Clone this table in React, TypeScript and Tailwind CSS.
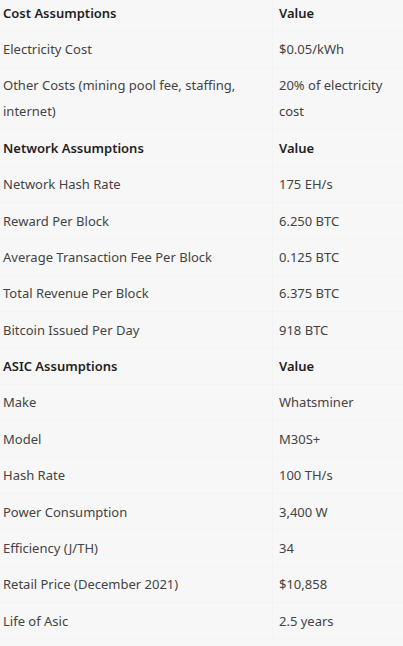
const rows: { label: string; value: string; head?: boolean }[] = [
  { label: "Cost Assumptions", value: "Value", head: true },
  { label: "Electricity Cost", value: "$0.05/kWh" },
  { label: "Other Costs (mining pool fee, staffing, internet)", value: "20% of electricity cost" },
  { label: "Network Assumptions", value: "Value", head: true },
  { label: "Network Hash Rate", value: "175 EH/s" },
  { label: "Reward Per Block", value: "6.250 BTC" },
  { label: "Average Transaction Fee Per Block", value: "0.125 BTC" },
  { label: "Total Revenue Per Block", value: "6.375 BTC" },
  { label: "Bitcoin Issued Per Day", value: "918 BTC" },
  { label: "ASIC Assumptions", value: "Value", head: true },
  { label: "Make", value: "Whatsminer" },
  { label: "Model", value: "M30S+" },
  { label: "Hash Rate", value: "100 TH/s" },
  { label: "Power Consumption", value: "3,400 W" },
  { label: "Efficiency (J/TH)", value: "34" },
  { label: "Retail Price (December 2021)", value: "$10,858" },
  { label: "Life of Asic", value: "2.5 years" },
];

export default function App() {
  return (
    <div className="h-[646px] w-[403px] overflow-hidden bg-[#f7f7f7] font-['Noto_Sans',sans-serif] text-[13px] text-[#444444]">
      <div className="-mt-[5px] flex flex-col">
        {rows.map((r) => (
          <div key={r.label} className="flex border-b border-[#f3f3f3]">
            <div
              className={`w-[273px] shrink-0 border-r border-[#f3f3f3] py-[4.7px] pl-[3px] pr-[20px] leading-[26px] ${
                r.head ? "font-semibold text-[#1f1f1f]" : ""
              }`}
            >
              {r.label}
            </div>
            <div
              className={`flex-1 py-[4.7px] pl-[6px] pr-[10px] leading-[26px] ${
                r.head ? "font-semibold text-[#1f1f1f]" : ""
              }`}
            >
              {r.value}
            </div>
          </div>
        ))}
      </div>
    </div>
  );
}
